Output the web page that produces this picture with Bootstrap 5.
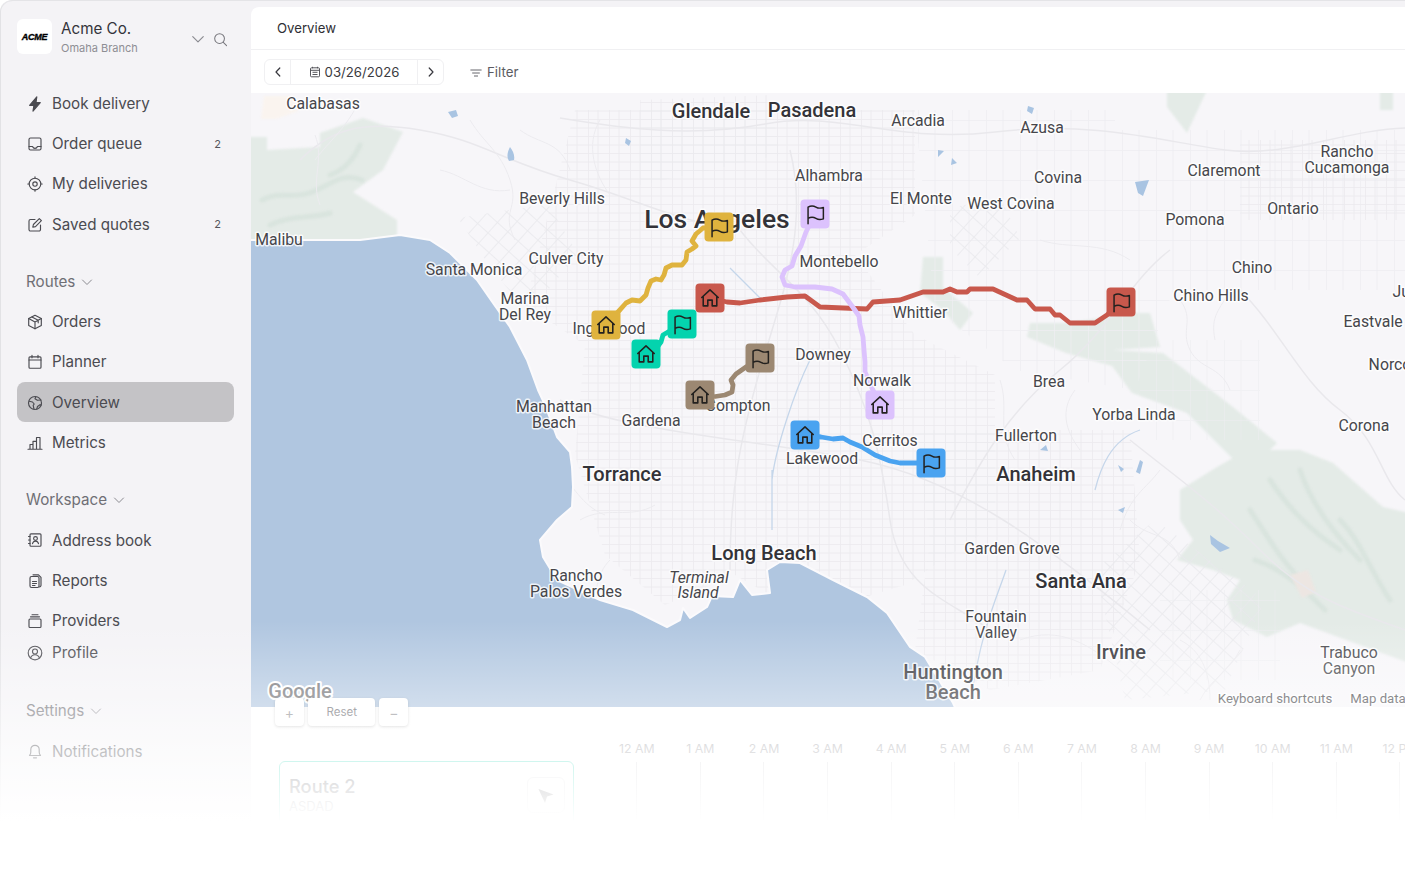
<!DOCTYPE html>
<html lang="en">
<head>
	<meta charset="UTF-8">
	<meta name="viewport" content="width=device-width, initial-scale=1.0">
	<title>Overview</title>
	<link href="https://cdn.jsdelivr.net/npm/bootstrap@5.3.0/dist/css/bootstrap.min.css" rel="stylesheet">
	<style>
		html, body { height: 880px; overflow: hidden; background: #fff; }
		body { font-family: "Inter", "Liberation Sans", sans-serif; color: #45454b; }
		.app-shell { width: 1405px; height: 825px; background: #f4f3f6; border-top: 1px solid #e4e4e7; box-shadow: inset 1px 0 #e2e2e5; border-top-left-radius: 12px; overflow: hidden; }
		.side-rail { width: 251px; flex: none; padding: 18px 17px 0 17px; }
		.logo-tile { width: 35px; height: 35px; background: #fff; border-radius: 6px; font: italic 700 9px "Liberation Sans", sans-serif; color: #000; letter-spacing: -.3px; -webkit-text-stroke: .35px #000; }
		.org-name { font-size: 15.2px; line-height: 20px; color: #33333a; margin-left: 1px; }
		.org-branch { font-size: 11px; line-height: 14px; color: #8e8e94; margin: 2px 0 0 1px; }
		.org-tools { margin: 4px 6px 0 auto; }
		.rail-list { margin-top: 28.2px; }
		.rail-link { height: 40.25px; padding: 2px 13px 0 10px; gap: 9px; font-size: 15.2px; color: #4b4b51; border-radius: 8px; }
		.rail-link:hover { color: #4b4b51; }
		.rail-link.is-on { background: #c4c3c6; }
		.rail-link svg { width: 16px; height: 16px; flex: none; fill: none; stroke: #4b4b51; stroke-width: 1.15; stroke-linecap: round; stroke-linejoin: round; margin-top: -1px; }
		.rail-count { margin-left: auto; font-size: 11px; color: #55555b; margin-top: -1px; }
		.rail-head { height: 40px; margin-top: 17.3px; padding: 1px 0 0 9px; gap: 6px; font-size: 15.2px; color: #6f6f75; }
		.rail-head.far { margin-top: 26.3px; }
		.rail-link.tight { height: 24px; }
		.work-panel { margin-top: 6px; background: #fff; border-top-left-radius: 8px; min-width: 0; }
		.crumb-bar { height: 43px; padding: 1px 0 0 26px; border-bottom: 1px solid #f0f0f2; font-size: 13.2px; color: #2f2f35; }
		.tool-bar { height: 43px; padding-left: 13px; }
		.date-group { height: 26px; border: 1px solid #f0f0f2; border-radius: 6px; width: 180px; font-size: 13.2px; color: #3a3a40; }
		.date-group span { padding-top: 2px; }
		.date-step { width: 26px; border-right: 1px solid #f0f0f2; }
		.date-step.last { border-right: 0; border-left: 1px solid #f0f0f2; }
		.filter-btn { margin-left: 26px; gap: 5px; font-size: 13.3px; color: #5c5c62; padding-top: 2px; }
		.map-view { display: block; width: 1154px; height: 614px; background: #f7f6f9; }
		.map-view text { font-family: "Roboto", "Liberation Sans", sans-serif; text-anchor: middle; dominant-baseline: central; paint-order: stroke; stroke: rgba(255,255,255,.8); stroke-width: 3px; stroke-linejoin: round; fill: #46464b; font-size: 15.8px; }
		.map-view .big { font-size: 20px; font-weight: 500; fill: #333338; }
		.map-view .huge { font-size: 26.5px; font-weight: 500; fill: #333338; transform: translateY(-.5px); }
		.map-view .isle { font-style: italic; }
		.map-view .note { font-size: 13.2px; }
		.map-view .brandmark { font-size: 20px; font-weight: 500; fill: #6f7074; stroke: #fff; stroke-width: 4px; }
		.soft-land { filter: blur(1.3px); }
		.soft-road { filter: blur(.5px); }
		.zoom-row { position: relative; z-index: 2; margin: -9px 0 0 24px; gap: 4px; }
		.zoom-key { height: 28px; min-width: 29px; padding: 1px 18.5px 0; background: #fff; border-radius: 4px; box-shadow: 0 1px 3px rgba(0,0,0,.22); font-size: 11.5px; color: #68686e; }
		.zoom-key.mini { padding: 0; font-size: 14px; color: #8a8a8f; }
		.hour-row { margin: 15px 0 0 354px; width: 860px; }
		.hour-cell { width: 63.6px; flex: none; text-align: center; font-size: 12.3px; line-height: 16px; color: #a9a9ad; white-space: nowrap; }
		.hour-cell i { display: block; width: 1px; height: 58px; margin: 5px auto 0; background: #dddde0; }
		.route-tile { position: absolute; left: 28px; top: 54px; width: 295px; height: 90px; border: 1px solid #5fe0c8; border-radius: 6px; padding: 13px 8px 14px 9px; background: #fff; }
		.route-name { font-size: 18.3px; line-height: 22px; font-weight: 500; color: #6a6a70; }
		.route-sub { font-size: 13px; line-height: 18px; color: #8f8f94; }
		.route-go { width: 38px; height: 36px; margin-top: 2px; border: 1px solid #e4e4e6; border-radius: 6px; }
		.lower-area { position: relative; }
		.fade-veil { position: absolute; left: 0; top: 620px; width: 1405px; height: 205px; z-index: 5; pointer-events: none; background: linear-gradient(to bottom, rgba(255,255,255,0), rgba(255,255,255,.42) 42%, rgba(255,255,255,.65) 63%, rgba(255,255,255,.85) 83%, #fff 98%); }
	</style>
</head>
<body>
	<svg width="0" height="0" class="position-absolute">
		<symbol id="ico-house" viewBox="0 0 24 24"><path d="M3 11.500 12 3.200l9 8.300M4.600 10.200V20.600h5V14.300h4.800v6.300h5V10.200" fill="none" stroke="#23211f" stroke-width="1.700" stroke-linecap="round" stroke-linejoin="round"/></symbol>
		<symbol id="ico-flag" viewBox="0 0 24 24"><path d="M3.500 22.500V3.500c3.500-2 6.500-1.500 9 0s5.500 1.500 8.500 .5v13c-3 1-6 1-8.500-.5s-5.500-2-9 0" fill="none" stroke="#23211f" stroke-width="1.700" stroke-linecap="round" stroke-linejoin="round"/></symbol>
		<symbol id="ico-down" viewBox="0 0 12 12"><path d="M1.500 4 6 8.500 10.500 4" fill="none" stroke="#8b8b91" stroke-width="1" stroke-linecap="round" stroke-linejoin="round"/></symbol>
		<pattern id="roads-a" width="21" height="17" patternUnits="userSpaceOnUse"><path d="M0 .5H21M.5 0V17M0 9H21M10 0V17" stroke="#ebeaee" stroke-width=".8" fill="none"/></pattern>
		<pattern id="roads-b" width="34" height="30" patternUnits="userSpaceOnUse"><path d="M0 .5H34M.5 0V30M17 0V30" stroke="#eeedf1" stroke-width=".8" fill="none"/></pattern>
		<pattern id="roads-c" width="14" height="14" patternUnits="userSpaceOnUse" patternTransform="rotate(42)"><path d="M0 .5H14M.5 0V14" stroke="#e9e8ec" stroke-width=".8" fill="none"/></pattern>
	</svg>

	<div class="app-shell d-flex position-relative">
		<aside class="side-rail">
			<div class="d-flex">
				<div class="logo-tile d-flex align-items-center justify-content-center flex-none">ACME</div>
				<div class="ms-2">
					<div class="org-name">Acme Co.</div>
					<div class="org-branch">Omaha Branch</div>
				</div>
				<div class="org-tools d-flex align-items-center gap-2">
					<svg width="14" height="14"><use href="#ico-down"/></svg>
					<svg width="15" height="15" viewBox="0 0 16 16" fill="none" stroke="#77777d" stroke-width="1.100" stroke-linecap="round"><circle cx="7" cy="7" r="5.200"/><path d="m11 11 3.500 3.500"/></svg>
				</div>
			</div>

			<nav class="nav flex-column rail-list">
				<a class="nav-link rail-link d-flex align-items-center" href="#"><svg viewBox="0 0 16 16"><path d="M9.800 .8 2.600 9.300h4.300L6 15.200l7.300-8.600H9z" fill="#4b4b51"/></svg>Book delivery</a>
				<a class="nav-link rail-link d-flex align-items-center" href="#"><svg viewBox="0 0 16 16"><rect x="2" y="2" width="12" height="12" rx="1.500"/><path d="M2 10.500h3.500c.5 1.300 1.500 1.800 2.500 1.800s2-.5 2.500-1.800H14"/></svg>Order queue<span class="rail-count">2</span></a>
				<a class="nav-link rail-link d-flex align-items-center" href="#"><svg viewBox="0 0 16 16"><circle cx="8" cy="8" r="5.800"/><circle cx="8" cy="8" r="2.200"/><path d="M8 .8v1.400M8 13.800v1.400M.8 8h1.400M13.800 8h1.400"/></svg>My deliveries</a>
				<a class="nav-link rail-link d-flex align-items-center" href="#"><svg viewBox="0 0 16 16"><path d="M8 2.500H3.500A1.500 1.500 0 0 0 2 4v8.500A1.500 1.500 0 0 0 3.500 14H12a1.500 1.500 0 0 0 1.500-1.500V8"/><path d="M12.300 1.600 14.400 3.700 8.500 9.600l-2.700.6.600-2.700z"/></svg>Saved quotes<span class="rail-count">2</span></a>
			</nav>

			<div class="rail-head d-flex align-items-center">Routes <svg width="12" height="12"><use href="#ico-down"/></svg></div>
			<nav class="nav flex-column">
				<a class="nav-link rail-link d-flex align-items-center" href="#"><svg viewBox="0 0 16 16"><path d="M8 1.300 14.300 4.600v6.800L8 14.700 1.700 11.400V4.600z"/><path d="M1.700 4.600 8 8l6.300-3.400M8 8v6.700M4.900 3 11.200 6.300v2.500"/></svg>Orders</a>
				<a class="nav-link rail-link d-flex align-items-center" href="#"><svg viewBox="0 0 16 16"><rect x="2" y="2.800" width="12" height="11.400" rx="1"/><path d="M2 6h12M5 1.300v2.500M11 1.300v2.500"/></svg>Planner</a>
				<a class="nav-link rail-link is-on d-flex align-items-center" href="#"><svg viewBox="0 0 16 16"><circle cx="8" cy="8" r="6.500"/><path d="M2.200 6.200 5.500 7l1.700 2-1 1.300.8 3.900M8.800 1.700 8 3.800l2.400 1.500L14 5M9.700 14.200l.8-2.700 2.500-1.800 1.400.2"/></svg>Overview</a>
				<a class="nav-link rail-link d-flex align-items-center" href="#"><svg viewBox="0 0 16 16"><path d="M1 14.200h14M3 14.200V9.500h3v4.700M6 14.200V6.300h3.500v7.900M9.500 14.200V2.500H13v11.700"/></svg>Metrics</a>
			</nav>

			<div class="rail-head d-flex align-items-center">Workspace <svg width="12" height="12"><use href="#ico-down"/></svg></div>
			<nav class="nav flex-column">
				<a class="nav-link rail-link d-flex align-items-center" href="#"><svg viewBox="0 0 16 16"><rect x="3" y="1.800" width="11" height="12.400" rx="1"/><circle cx="8.500" cy="6.500" r="1.900"/><path d="M5.500 11.600c.5-1.800 1.500-2.500 3-2.500s2.500.7 3 2.500M1.500 4.500H3M1.500 8H3M1.500 11.500H3"/></svg>Address book</a>
				<a class="nav-link rail-link d-flex align-items-center" href="#"><svg viewBox="0 0 16 16"><path d="M6 1.800h5.500L14 4.300v8a1.500 1.500 0 0 1-1.500 1.500"/><rect x="3" y="3.500" width="9" height="11" rx="1.500"/><path d="M5.500 8.500h4M5.500 10.500h4M5.500 12.500h2.500"/></svg>Reports</a>
				<a class="nav-link rail-link d-flex align-items-center" href="#"><svg viewBox="0 0 16 16"><rect x="2" y="6" width="12" height="8.500" rx="1"/><path d="M3.500 3.800h9M5 1.700h6"/></svg>Providers</a>
				<a class="nav-link rail-link tight d-flex align-items-center" href="#"><svg viewBox="0 0 16 16"><circle cx="8" cy="8" r="6.800"/><circle cx="8" cy="6.500" r="2.500"/><path d="M3.500 13c.8-2.200 2.500-3.300 4.500-3.300s3.700 1.100 4.500 3.300"/></svg>Profile</a>
			</nav>

			<div class="rail-head far d-flex align-items-center">Settings <svg width="12" height="12"><use href="#ico-down"/></svg></div>
			<nav class="nav flex-column">
				<a class="nav-link rail-link d-flex align-items-center" href="#"><svg viewBox="0 0 16 16"><path d="M2.500 12.500c1-1 1.300-2 1.300-3.500V6.500a4.200 4.200 0 0 1 8.400 0V9c0 1.500.3 2.500 1.300 3.500zM6.500 14.800h3"/></svg>Notifications</a>
			</nav>
		</aside>

		<main class="work-panel flex-grow-1 d-flex flex-column">
			<div class="crumb-bar d-flex align-items-center">Overview</div>
			<div class="tool-bar d-flex align-items-center">
				<div class="date-group d-flex align-items-stretch">
					<div class="date-step d-flex align-items-center justify-content-center">
						<svg width="10" height="10" viewBox="0 0 10 10" fill="none" stroke="#3a3a40" stroke-width="1.200" stroke-linecap="round" stroke-linejoin="round"><path d="M6.800 1 3 5l3.800 4"/></svg>
					</div>
					<div class="flex-grow-1 d-flex align-items-center justify-content-center gap-1">
						<svg width="12" height="12" viewBox="0 0 12 12" fill="none" stroke="#55555b" stroke-width="1"><rect x="1.500" y="1.800" width="9" height="9" rx="1"/><path d="M1.500 4.300h9M3.500 .8v1.500M8.500 .8v1.500M3.500 6.300h5M3.500 8.500h5"/></svg>
						<span>03/26/2026</span>
					</div>
					<div class="date-step last d-flex align-items-center justify-content-center">
						<svg width="10" height="10" viewBox="0 0 10 10" fill="none" stroke="#3a3a40" stroke-width="1.200" stroke-linecap="round" stroke-linejoin="round"><path d="M3.200 1 7 5 3.200 9"/></svg>
					</div>
				</div>
				<div class="filter-btn d-flex align-items-center">
					<svg width="12" height="10" viewBox="0 0 12 10" fill="none" stroke="#66666c" stroke-width="1" stroke-linecap="round"><path d="M.8 2h10.400M2.600 5h6.800M4.400 8h3.200"/></svg>
					Filter
				</div>
			</div>

			<svg class="map-view" viewBox="251 93 1154 614">
				<!-- parks -->
				<g class="soft-land" fill="#e4ebe7">
					<path d="M248 137h19v13l53-3v-14l43-15 40 14-20 38-30 22 44 28v27l-14 6-50-3h-85z"/>
					<path d="M1180 490l37-23 30-17h53l33 13 50 44 26 6v150l-109-40-33 14-34-17-6-20 13-20-27-10-36-10 16-20-13-20z"/>
					<path d="M1030 323h37l66-10h17l10 34-47 3 50 3 70 54 44 36-30 30-60-60-55-20-20-27-46-13-39-16z"/>
					<path d="M923 257h20v30l30 26-13 17-17-20-23-17z"/>
					<path d="M1167 90h40l-20 43-20-26zM1380 90h13v20h-13z"/>
				</g>
				<g class="soft-land" fill="none" stroke="#d9e4de" stroke-width="5" stroke-linecap="round">
					<path d="M262 200c20-10 30 0 50-8s30-20 50-12M270 225c20-10 40-6 60-12M330 175c15-5 25-18 30-30"/>
					<path d="M1270 480c20 30 40 50 70 70M1300 470c10 30 30 60 60 90M1250 510c20 30 30 50 60 80M1340 520c20 20 30 50 50 80"/>
					<path d="M1255 560c30 10 50 30 70 50"/>
				</g>
				<path class="soft-land" d="M264 96h30l4 15-22 8h-15z" fill="#faf4ef"/>
				<path class="soft-land" d="M1290 575l18-5 8 22-14 6z" fill="#ede6e2"/>
				<!-- street grids -->
				<g class="soft-road">
					<path d="M575 110h340v105l-60 40 60 80 80 40v150l-90 60-100 30-70-40-70 30-60-50-30-100 10-110-60-40z" fill="url(#roads-a)"/>
					<path d="M915 110h200v110l70 40-50 130-120-20-80-60zM1100 130h305v160h-305z" fill="url(#roads-b)"/>
					<path d="M915 430h215l10 130-40 110-110 20-75-40 15-110z" fill="url(#roads-a)"/>
					<path d="M1095 570l60-50 110 80-40 90-100 10zM458 218l90-14 30 50-50 60-40-50zM950 208l50-10 20 40-40 40-30-30z" fill="url(#roads-c)"/>
					<path d="M640 100l130-5 10 60-140 30zM1240 140h165v80h-165z" fill="url(#roads-a)"/>
					<path d="M1140 340h120v100h-120zM1160 590h120v90h-120z" fill="url(#roads-b)" opacity=".7"/>
				</g>
				<!-- freeways and canyon roads -->
				<g class="soft-road" fill="none" stroke="#e9e8ec" stroke-width="1.500">
					<path d="M560 118c60 10 130 20 205 6s130 20 230 8 170 10 230 18 120-20 180-22"/>
					<path d="M300 160c30-30 60-40 120-30s80 30 150 50 100 40 170 50"/>
					<path d="M740 230c30 40 70 60 100 120s40 100 50 170 60 80 100 110"/>
					<path d="M790 150c20 80-10 150-30 220s-30 120-30 200"/>
					<path d="M560 400c50 30 200 40 300 60s180 80 290 170"/>
					<path d="M1170 250c-40 30-60 80-110 120s-80 90-110 150"/>
					<path d="M1130 440c50 40 80 60 130 110s90 60 145 80"/>
					<path d="M1240 290c40 40 60 90 100 120s40 70 65 90"/>
				</g>
				<g class="soft-road" fill="none" stroke="#ecebef" stroke-width="1">
					<path d="M315 135c10 25-5 45 5 70M360 100c-15 30-30 40-45 60M470 120c15 25 30 30 40 60s-10 30 5 60M520 130c20 15 40 10 50 40M440 170c25 5 40 25 70 20M600 120c-15 25-5 55 10 75"/>
					<path d="M1180 300c15 20 0 30 10 50s30 15 40 40M1230 290c-10 20-20 25-15 50M1040 240c30 10 60 0 90 20M1000 380c10 30-5 50 15 80M1075 390c-15 20-10 40 5 60M1160 470c-15 20-30 25-40 60M1130 520c20 20 40 10 50 40"/>
					<path d="M1020 640c40-15 70 5 100 30M1180 640c20 10 30 30 30 60M1240 650c-10 20-30 30-40 50M580 520c25-15 50 0 75-15M555 470c20 15 25 35 50 45M610 560c-15 15-10 30-20 40"/>
				</g>
				<!-- water -->
				<path d="M246 240 300 240 360 240 400 235 430 240 450 253 477 280 493 303 510 327 527 360 538 390 545 405 557 437 570 452 572 467 573 487 572 507 557 520 540 540 543 557 557 580 600 600 633 610 667 627 680 620 683 608 690 618 707 607 712 596 733 597 740 580 752 595 770 593 767 570 780 562 800 563 833 580 867 597 887 613 910 647 925 657 953 703 957 712H246z" fill="#b0c6e0" stroke="#fbfafc" stroke-width="2" stroke-linejoin="round"/>
				<g fill="#a9c4e2">
					<path d="M448 112l8-2 2 6-6 2zM510 147c3 4 5 8 4 13l-5 1c-3-5-1-10 1-14zM626 138l5 3-2 5-4-3zM1028 106l6 2-2 6-5-3zM938 150l6 1-6 6zM952 158l5 5-6 2zM1135 182l14-2-6 16-5-3zM1210 535l8 6 12 7-10 4-9-8zM1118 510l7-3-2 6zM1136 472l4-12 3 2-3 12zM1040 450l6-5 2 6zM1118 465l6 4-3 3z"/>
					<path d="M1140 430c-30 10-40 40-45 60M1006 570c-10 30-25 60-35 130M810 360c-15 30-35 90-38 120M772 470v60M730 268l30 30" fill="none" stroke="#c5d6ea" stroke-width="1.300"/>
				</g>

				<!-- routes -->
				<g fill="none" stroke-width="4.800" stroke-linecap="round" stroke-linejoin="round">
					<path stroke="#dfb33e" d="M606 325 618 312 626 303 632 300 640 301 646 295 648 288 651 281 656 279 661 280 664 275 666 268 672 265 682 265 686 260 687 252 692 249 696 246 692 241 696 234 703 228 719 227"/>
					<path stroke="#c8584c" d="M710 298 727 302 740 303 760 300 787 297 805 296 820 307 867 309 873 302 900 300 923 292 943 292 950 289 957 292 967 292 970 289 993 289 1017 300 1027 300 1035 309 1050 309 1055 315 1060 315 1070 323 1095 323 1107 315 1121 302"/>
					<path stroke="#04d3ae" d="M646 354 658 346 661 342 663 335 668 332 682 324"/>
					<path stroke="#9c8872" d="M700 395 712 397 725 395 732 392 733 385 731 380 736 374 746 367 760 358"/>
					<path stroke="#dcc2fd" d="M815 214 806 232 801 246 795 256 792 266 785 270 782 277 785 285 795 287 815 287 832 289 843 294 852 306 859 316 860 325 863 337 864 350 865 362 865 372 872 388 880 405"/>
					<path stroke="#4aa3f0" d="M805 435 821 437 833 439 843 438 850 442 862 447 875 455 890 461 900 463 931 463"/>
				</g>

				<!-- place names -->
				<text x="323" y="103">Calabasas</text>
				<text x="711" y="111" class="big">Glendale</text>
				<text x="812" y="110" class="big">Pasadena</text>
				<text x="918" y="120">Arcadia</text>
				<text x="1042" y="127">Azusa</text>
				<text x="829" y="175">Alhambra</text>
				<text x="1058" y="177">Covina</text>
				<text x="921" y="198">El Monte</text>
				<text x="1011" y="203">West Covina</text>
				<text x="1224" y="170">Claremont</text>
				<text x="1347" y="151">Rancho</text>
				<text x="1347" y="167">Cucamonga</text>
				<text x="562" y="198">Beverly Hills</text>
				<text x="717" y="219" class="huge">Los Angeles</text>
				<text x="1195" y="219">Pomona</text>
				<text x="1293" y="208">Ontario</text>
				<text x="279" y="239">Malibu</text>
				<text x="566" y="258">Culver City</text>
				<text x="474" y="269">Santa Monica</text>
				<text x="839" y="261">Montebello</text>
				<text x="1252" y="267">Chino</text>
				<text x="1211" y="295">Chino Hills</text>
				<text x="1417" y="291">Jurupa</text>
				<text x="525" y="298">Marina</text>
				<text x="525" y="314">Del Rey</text>
				<text x="609" y="328">Inglewood</text>
				<text x="920" y="312">Whittier</text>
				<text x="1373" y="321">Eastvale</text>
				<text x="823" y="354">Downey</text>
				<text x="1390" y="364">Norco</text>
				<text x="882" y="380">Norwalk</text>
				<text x="1049" y="381">Brea</text>
				<text x="738" y="405">Compton</text>
				<text x="554" y="406">Manhattan</text>
				<text x="554" y="422">Beach</text>
				<text x="651" y="420">Gardena</text>
				<text x="1134" y="414">Yorba Linda</text>
				<text x="1364" y="425">Corona</text>
				<text x="890" y="440">Cerritos</text>
				<text x="1026" y="435">Fullerton</text>
				<text x="822" y="458">Lakewood</text>
				<text x="622" y="474" class="big">Torrance</text>
				<text x="1036" y="474" class="big">Anaheim</text>
				<text x="764" y="553" class="big">Long Beach</text>
				<text x="1012" y="548">Garden Grove</text>
				<text x="576" y="575">Rancho</text>
				<text x="576" y="591">Palos Verdes</text>
				<text x="699" y="577" class="isle">Terminal</text>
				<text x="698" y="592" class="isle">Island</text>
				<text x="1081" y="581" class="big">Santa Ana</text>
				<text x="996" y="616">Fountain</text>
				<text x="996" y="632">Valley</text>
				<text x="1121" y="652" class="big">Irvine</text>
				<text x="1349" y="652">Trabuco</text>
				<text x="1349" y="668">Canyon</text>
				<text x="953" y="672" class="big">Huntington</text>
				<text x="953" y="692" class="big">Beach</text>
				<text x="300" y="691" class="brandmark">Google</text>
				<text x="1275" y="698" class="note">Keyboard shortcuts</text>
				<text x="1378" y="698" class="note">Map data</text>

				<!-- pins -->
				<g>
					<rect x="591.500" y="310.500" width="29" height="29" rx="4" fill="#dfb33e"/><use href="#ico-house" x="595" y="314" width="22" height="22"/>
					<rect x="704.500" y="212.500" width="29" height="29" rx="4" fill="#dfb33e"/><use href="#ico-flag" x="709" y="217" width="21" height="21"/>
					<rect x="695.500" y="283.500" width="29" height="29" rx="4" fill="#c8584c"/><use href="#ico-house" x="699" y="287" width="22" height="22"/>
					<rect x="1106.500" y="287.500" width="29" height="29" rx="4" fill="#c8584c"/><use href="#ico-flag" x="1111" y="292" width="21" height="21"/>
					<rect x="631.500" y="339.500" width="29" height="29" rx="4" fill="#04d3ae"/><use href="#ico-house" x="635" y="343" width="22" height="22"/>
					<rect x="667.500" y="309.500" width="29" height="29" rx="4" fill="#04d3ae"/><use href="#ico-flag" x="672" y="314" width="21" height="21"/>
					<rect x="685.500" y="380.500" width="29" height="29" rx="4" fill="#9c8872"/><use href="#ico-house" x="689" y="384" width="22" height="22"/>
					<rect x="745.500" y="343.500" width="29" height="29" rx="4" fill="#9c8872"/><use href="#ico-flag" x="750" y="348" width="21" height="21"/>
					<rect x="800.500" y="199.500" width="29" height="29" rx="4" fill="#dcc2fd"/><use href="#ico-flag" x="805" y="204" width="21" height="21"/>
					<rect x="865.500" y="390.500" width="29" height="29" rx="4" fill="#dcc2fd"/><use href="#ico-house" x="869" y="394" width="22" height="22"/>
					<rect x="790.500" y="420.500" width="29" height="29" rx="4" fill="#4aa3f0"/><use href="#ico-house" x="794" y="424" width="22" height="22"/>
					<rect x="916.500" y="448.500" width="29" height="29" rx="4" fill="#4aa3f0"/><use href="#ico-flag" x="921" y="453" width="21" height="21"/>
				</g>
			</svg>

			<div class="lower-area flex-grow-1">
				<div class="zoom-row d-flex">
					<div class="zoom-key mini d-flex align-items-center justify-content-center">+</div>
					<div class="zoom-key d-flex align-items-center justify-content-center">Reset</div>
					<div class="zoom-key mini d-flex align-items-center justify-content-center">−</div>
				</div>
				<div class="hour-row d-flex">
					<div class="hour-cell">12 AM<i></i></div>
					<div class="hour-cell">1 AM<i></i></div>
					<div class="hour-cell">2 AM<i></i></div>
					<div class="hour-cell">3 AM<i></i></div>
					<div class="hour-cell">4 AM<i></i></div>
					<div class="hour-cell">5 AM<i></i></div>
					<div class="hour-cell">6 AM<i></i></div>
					<div class="hour-cell">7 AM<i></i></div>
					<div class="hour-cell">8 AM<i></i></div>
					<div class="hour-cell">9 AM<i></i></div>
					<div class="hour-cell">10 AM<i></i></div>
					<div class="hour-cell">11 AM<i></i></div>
					<div class="hour-cell">12 PM<i></i></div>
				</div>
				<div class="route-tile d-flex justify-content-between">
					<div>
						<div class="route-name">Route 2</div>
						<div class="route-sub">ASDAD</div>
					</div>
					<div class="route-go d-flex align-items-center justify-content-center">
						<svg width="18" height="18" viewBox="0 0 18 18"><path d="M1.500 3 16.500 8.500 10 10.500 8 17z" fill="#77777b"/></svg>
					</div>
				</div>
			</div>
		</main>
		<div class="fade-veil"></div>
	</div>
</body>
</html>
